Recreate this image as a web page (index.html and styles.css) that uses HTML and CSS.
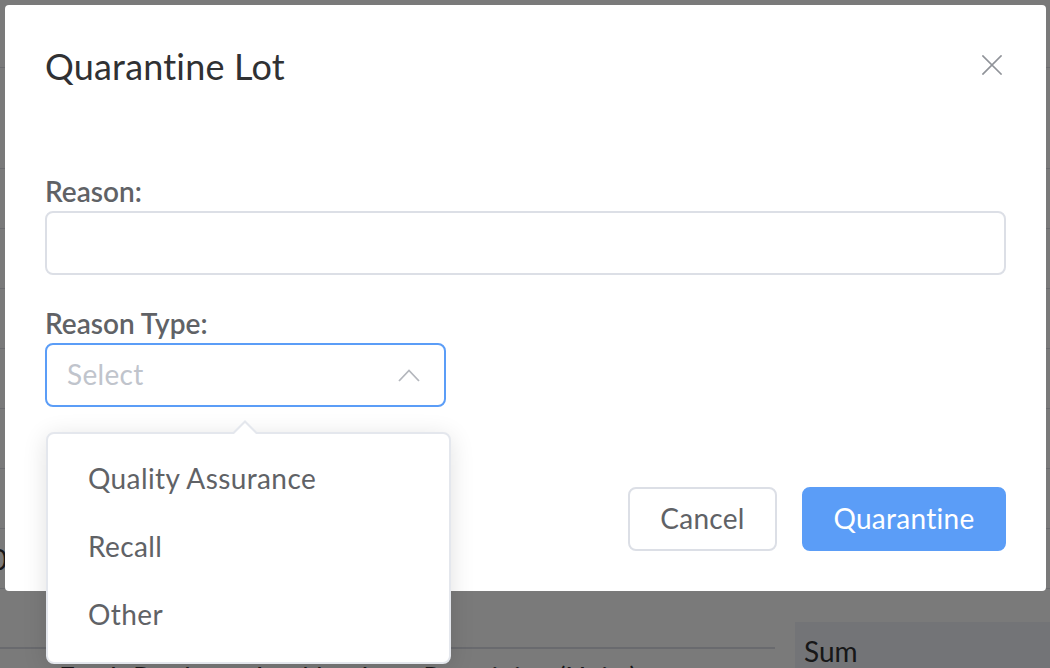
FILE: index.html
```html
<!DOCTYPE html>
<html lang="en">
<head>
<meta charset="utf-8">
<title>Quarantine Lot</title>
<link rel="stylesheet" href="styles.css">
</head>
<body>
<div class="page">
  <div class="pg-top"></div>
  <div class="pg-head"></div>
  <div class="pg-row"></div>
  <div class="pg-row"><span class="pg-cell">(</span></div>
  <div class="pg-row"></div>
  <div class="pg-row"><span class="pg-cell">:</span></div>
  <div class="pg-row"></div>
  <div class="pg-row"></div>
  <div class="pg-row"><span class="pg-cell">0</span></div>
  <div class="pg-foot">
    <div class="pg-foot-left"></div>
    <div class="pg-sum">Sum</div>
  </div>
  <div class="pg-last">Fresh Produce &nbsp; Lot Number &nbsp; Remaining (Units)</div>
</div>

<div class="overlay"></div>

<div class="dialog" role="dialog" aria-label="Quarantine Lot">
  <div class="dialog-header">
    <span class="dialog-title">Quarantine Lot</span>
    <svg class="dialog-close" width="20" height="20" viewBox="0 0 20 20" aria-hidden="true">
      <path d="M1 1 L19 19 M19 1 L1 19" stroke="#909399" stroke-width="1.7" fill="none" stroke-linecap="square"/>
    </svg>
  </div>
  <div class="dialog-body">
    <div class="form-item">
      <label class="form-label">Reason:</label>
      <div class="input"></div>
    </div>
    <div class="form-item last">
      <label class="form-label">Reason Type:</label>
      <div class="select">
        <span class="placeholder">Select</span>
        <svg class="chevron" width="24" height="15" viewBox="0 0 24 15" aria-hidden="true">
          <polyline points="2,13 12,2.5 22,13" stroke="#b4b7bd" stroke-width="1.8" fill="none"/>
        </svg>
      </div>
    </div>
  </div>
  <div class="dialog-footer">
    <button class="btn btn-default">Cancel</button>
    <button class="btn btn-primary">Quarantine</button>
  </div>
</div>

<div class="dropdown">
  <ul class="dropdown-list">
    <li class="dropdown-item">Quality Assurance</li>
    <li class="dropdown-item">Recall</li>
    <li class="dropdown-item">Other</li>
  </ul>
</div>
</body>
</html>
```

FILE: styles.css
```css
* { box-sizing: border-box; }

html, body {
  margin: 0;
  padding: 0;
}

body {
  width: 1050px;
  height: 668px;
  overflow: hidden;
  position: relative;
  font-family: Lato, "Liberation Sans", sans-serif;
  color: #303133;
}

/* Background page */
.page {
  height: 668px;
  overflow: hidden;
  background: #ffffff;
}

.pg-top {
  height: 68px;
  border-bottom: 1px solid #dfe1e8;
}

.pg-head {
  height: 101px;
  border-bottom: 1px solid #dfe1e8;
}

.pg-row {
  height: 60px;
  border-bottom: 1px solid #dfe1e8;
  display: flex;
  align-items: center;
  font-size: 28px;
  color: #303133;
}

.pg-cell {
  margin-left: -9px;
}

.pg-foot {
  display: flex;
  height: 60px;
}

.pg-foot-left {
  width: 775px;
  border-bottom: 2px solid #dcdee6;
}

.pg-sum {
  flex: 1;
  margin-left: 20px;
  margin-top: 33px;
  height: 80px;
  background: #f0f2f8;
  padding: 9px 0 0 9px;
  font-size: 28px;
  line-height: 40px;
  color: #303133;
}

.pg-last {
  padding: 8px 0 0 59px;
  font-size: 28px;
  line-height: 40px;
  color: #303133;
}

.overlay {
  position: absolute;
  inset: 0;
  background: rgba(0, 0, 0, 0.52);
}

/* Dialog */
.dialog {
  position: absolute;
  left: 5px;
  top: 5px;
  width: 1041px;
  background: #ffffff;
  border-radius: 4px;
}

.dialog-header {
  padding: 37px 40px 20px;
}

.dialog-title {
  display: block;
  font-size: 36px;
  line-height: 48px;
  letter-spacing: 0.2px;
  color: #303133;
}

.dialog-close {
  position: absolute;
  top: 50px;
  right: 44px;
}

.dialog-body {
  padding: 62px 40px 60px;
}

.form-item {
  margin-bottom: 29px;
}

.form-item.last {
  margin-bottom: 0;
}

.form-label {
  display: block;
  font-size: 28px;
  line-height: 38px;
  font-weight: 600;
  color: #606266;
  margin-bottom: 1px;
}

.input {
  height: 64px;
  border: 2px solid #dcdfe6;
  border-radius: 8px;
  background: #fff;
}

.select {
  width: 401px;
  height: 64px;
  border: 2px solid #5b9df7;
  border-radius: 8px;
  display: flex;
  align-items: center;
  justify-content: space-between;
  padding: 0 23px 2px 20px;
}

.chevron {
  margin-top: 2px;
}

.placeholder {
  font-size: 28px;
  letter-spacing: 0.3px;
  color: #c0c4cc;
}

.dialog-footer {
  padding: 20px 40px 40px;
  display: flex;
  justify-content: flex-end;
  gap: 25px;
}

.btn {
  height: 64px;
  border-radius: 8px;
  font-family: inherit;
  font-size: 28px;
  letter-spacing: 0.3px;
  padding: 0 0 3px;
  cursor: pointer;
}

.btn-default {
  width: 149px;
  border: 2px solid #dcdfe6;
  background: #ffffff;
  color: #606266;
}

.btn-primary {
  width: 204px;
  border: 2px solid #5b9df7;
  background: #5b9df7;
  color: #ffffff;
}

/* Dropdown */
.dropdown {
  position: absolute;
  left: 46px;
  top: 432px;
  width: 405px;
  background: #ffffff;
  border: 2px solid #e4e7ed;
  border-radius: 8px;
  box-shadow: 0 4px 24px rgba(0, 0, 0, 0.12);
}

.dropdown::before,
.dropdown::after {
  content: "";
  position: absolute;
  left: 185px;
  width: 0;
  height: 0;
  border-left: 12px solid transparent;
  border-right: 12px solid transparent;
}

.dropdown::before {
  top: -14px;
  border-bottom: 12px solid #e4e7ed;
}

.dropdown::after {
  top: -11px;
  border-bottom: 12px solid #ffffff;
}

.dropdown-list {
  list-style: none;
  margin: 0;
  padding: 12px 0;
}

.dropdown-item {
  height: 68px;
  line-height: 64px;
  padding: 0 40px;
  font-size: 28px;
  letter-spacing: 0.4px;
  color: #606266;
}
```
